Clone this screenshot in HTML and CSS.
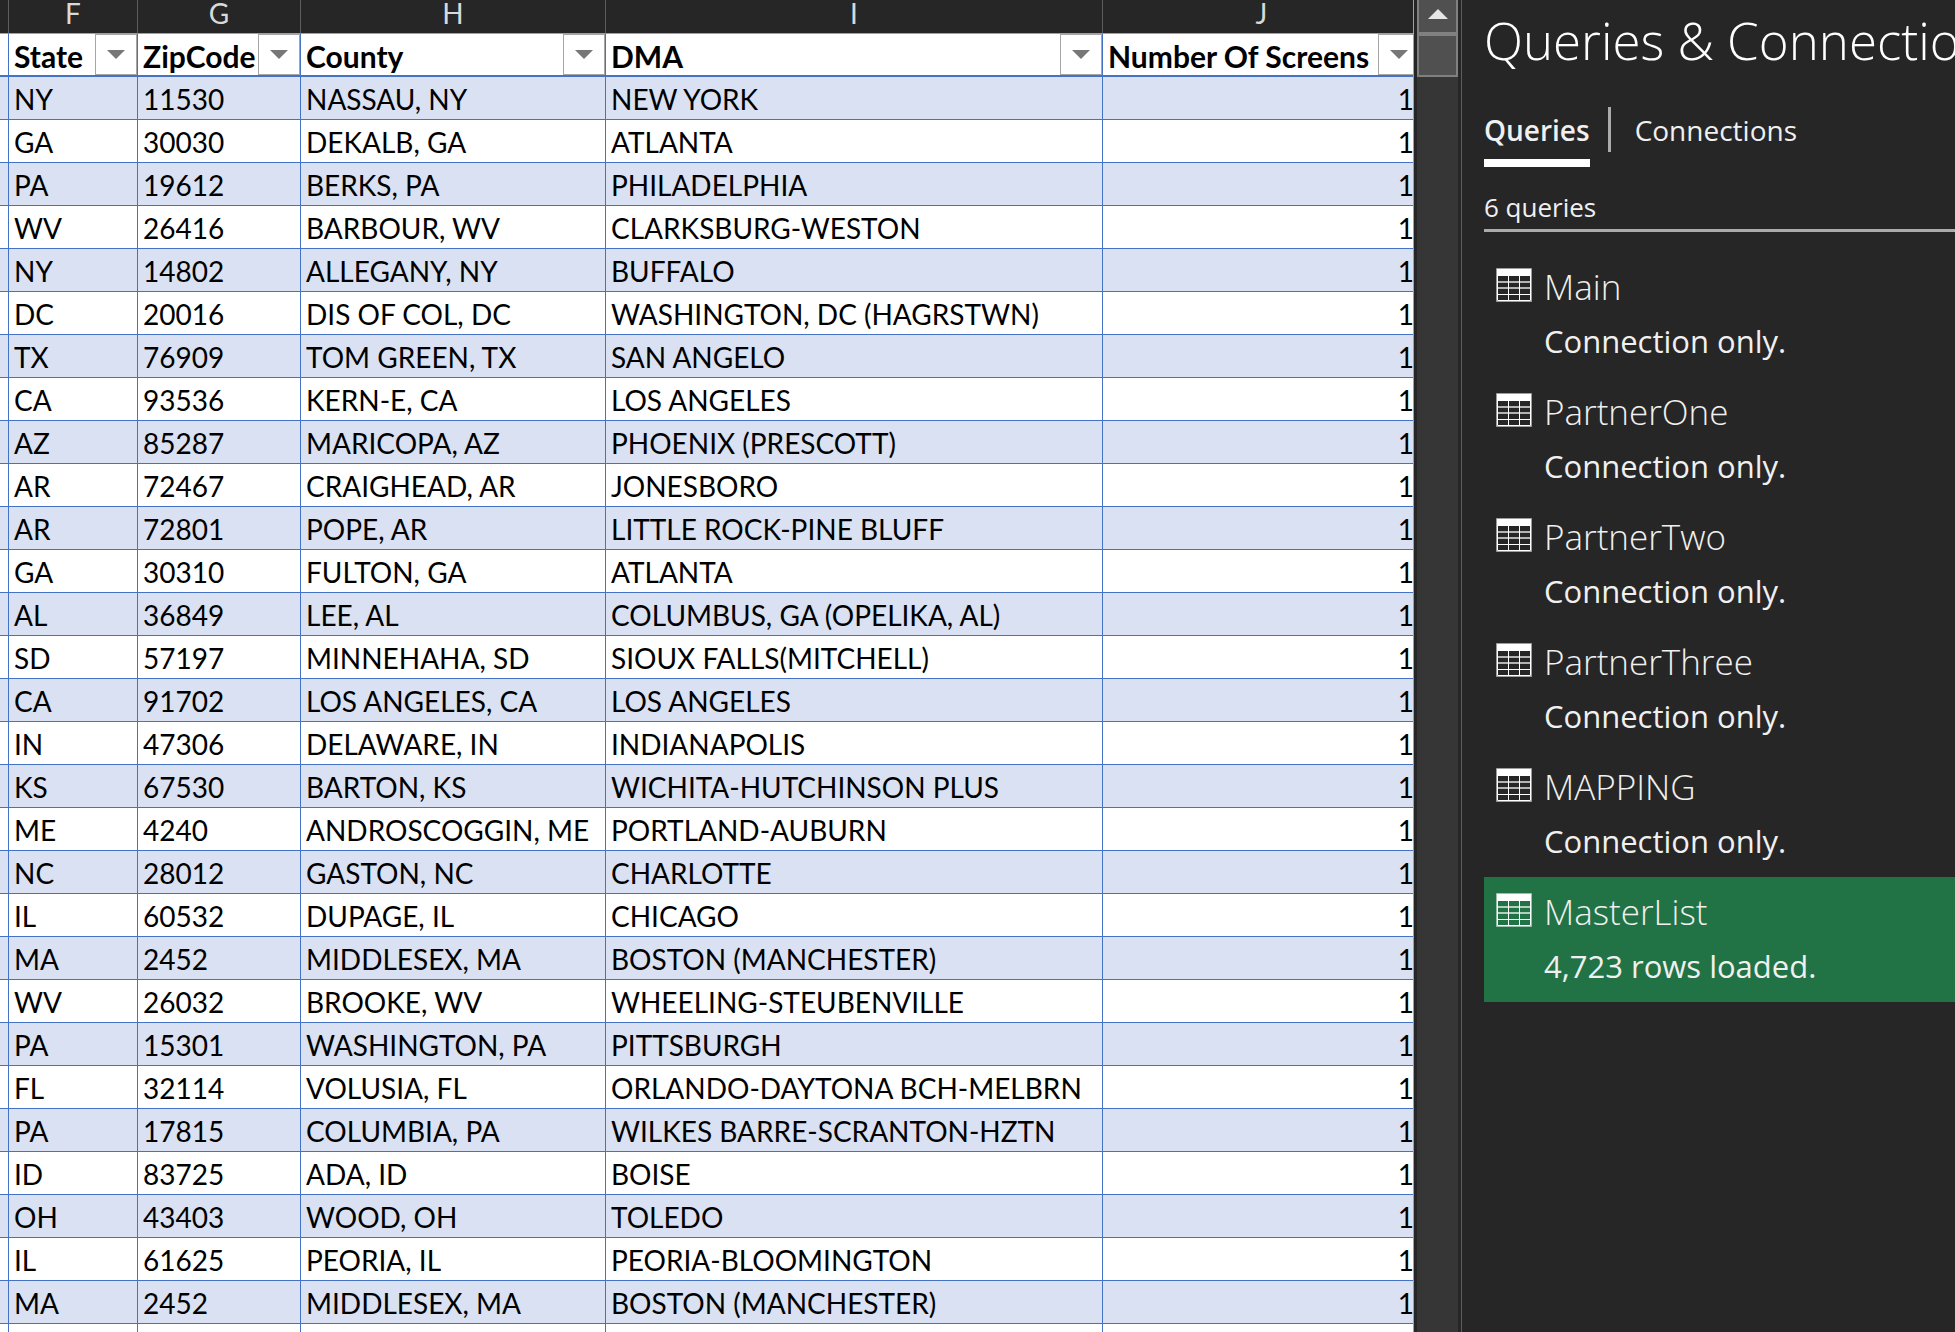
FILE: index.html
```html
<!DOCTYPE html>
<html lang="en">
<head>
<meta charset="utf-8">
<title>Queries &amp; Connections</title>
<link rel="stylesheet" href="styles.css">
</head>
<body>
<svg class="sprite" aria-hidden="true">
  <symbol id="table-icon" viewBox="0 0 36 34">
    <path d="M.5 .5h35v33H.5z" fill="none" stroke="#fff" stroke-opacity=".55"/>
    <path d="M1 1h34v7H1z" fill="#fff"/>
    <path d="M1.500 8v24.500h33V8M12.500 8v25M23.500 8v25M1 26.500h34" fill="none" stroke="#fff"/>
    <path d="M1 14h34M1 20h34" fill="none" stroke="#fff" stroke-opacity=".65" stroke-width="2"/>
  </symbol>
  <symbol id="arrow-down" viewBox="0 0 18 9"><path d="M0 0h18L9 9z" fill="#777"/></symbol>
  <symbol id="arrow-up" viewBox="0 0 20 10"><path d="M0 10h20L10 0z" fill="#e6e6e6"/></symbol>
</svg>
<div class="workbook">
  <main class="sheet">
    <table class="grid">
      <colgroup><col class="col-e"><col class="col-f"><col class="col-g"><col class="col-h"><col class="col-i"><col></colgroup>
      <thead>
        <tr class="letters"><th></th><th>F</th><th>G</th><th>H</th><th>I</th><th>J</th></tr>
        <tr class="fields">
          <th></th>
          <th><div class="field"><span>State</span><button class="filter" aria-label="Filter State"><svg><use href="#arrow-down"/></svg></button></div></th>
          <th><div class="field"><span>ZipCode</span><button class="filter" aria-label="Filter ZipCode"><svg><use href="#arrow-down"/></svg></button></div></th>
          <th><div class="field"><span>County</span><button class="filter" aria-label="Filter County"><svg><use href="#arrow-down"/></svg></button></div></th>
          <th><div class="field"><span>DMA</span><button class="filter" aria-label="Filter DMA"><svg><use href="#arrow-down"/></svg></button></div></th>
          <th><div class="field"><span>Number Of Screens</span><button class="filter" aria-label="Filter Number Of Screens"><svg><use href="#arrow-down"/></svg></button></div></th>
        </tr>
      </thead>
      <tbody>
        <tr><td></td><td>NY</td><td>11530</td><td>NASSAU, NY</td><td>NEW YORK</td><td>1</td></tr>
        <tr><td></td><td>GA</td><td>30030</td><td>DEKALB, GA</td><td>ATLANTA</td><td>1</td></tr>
        <tr><td></td><td>PA</td><td>19612</td><td>BERKS, PA</td><td>PHILADELPHIA</td><td>1</td></tr>
        <tr><td></td><td>WV</td><td>26416</td><td>BARBOUR, WV</td><td>CLARKSBURG-WESTON</td><td>1</td></tr>
        <tr><td></td><td>NY</td><td>14802</td><td>ALLEGANY, NY</td><td>BUFFALO</td><td>1</td></tr>
        <tr><td></td><td>DC</td><td>20016</td><td>DIS OF COL, DC</td><td>WASHINGTON, DC (HAGRSTWN)</td><td>1</td></tr>
        <tr><td></td><td>TX</td><td>76909</td><td>TOM GREEN, TX</td><td>SAN ANGELO</td><td>1</td></tr>
        <tr><td></td><td>CA</td><td>93536</td><td>KERN-E, CA</td><td>LOS ANGELES</td><td>1</td></tr>
        <tr><td></td><td>AZ</td><td>85287</td><td>MARICOPA, AZ</td><td>PHOENIX (PRESCOTT)</td><td>1</td></tr>
        <tr><td></td><td>AR</td><td>72467</td><td>CRAIGHEAD, AR</td><td>JONESBORO</td><td>1</td></tr>
        <tr><td></td><td>AR</td><td>72801</td><td>POPE, AR</td><td>LITTLE ROCK-PINE BLUFF</td><td>1</td></tr>
        <tr><td></td><td>GA</td><td>30310</td><td>FULTON, GA</td><td>ATLANTA</td><td>1</td></tr>
        <tr><td></td><td>AL</td><td>36849</td><td>LEE, AL</td><td>COLUMBUS, GA (OPELIKA, AL)</td><td>1</td></tr>
        <tr><td></td><td>SD</td><td>57197</td><td>MINNEHAHA, SD</td><td>SIOUX FALLS(MITCHELL)</td><td>1</td></tr>
        <tr><td></td><td>CA</td><td>91702</td><td>LOS ANGELES, CA</td><td>LOS ANGELES</td><td>1</td></tr>
        <tr><td></td><td>IN</td><td>47306</td><td>DELAWARE, IN</td><td>INDIANAPOLIS</td><td>1</td></tr>
        <tr><td></td><td>KS</td><td>67530</td><td>BARTON, KS</td><td>WICHITA-HUTCHINSON PLUS</td><td>1</td></tr>
        <tr><td></td><td>ME</td><td>4240</td><td>ANDROSCOGGIN, ME</td><td>PORTLAND-AUBURN</td><td>1</td></tr>
        <tr><td></td><td>NC</td><td>28012</td><td>GASTON, NC</td><td>CHARLOTTE</td><td>1</td></tr>
        <tr><td></td><td>IL</td><td>60532</td><td>DUPAGE, IL</td><td>CHICAGO</td><td>1</td></tr>
        <tr><td></td><td>MA</td><td>2452</td><td>MIDDLESEX, MA</td><td>BOSTON (MANCHESTER)</td><td>1</td></tr>
        <tr><td></td><td>WV</td><td>26032</td><td>BROOKE, WV</td><td>WHEELING-STEUBENVILLE</td><td>1</td></tr>
        <tr><td></td><td>PA</td><td>15301</td><td>WASHINGTON, PA</td><td>PITTSBURGH</td><td>1</td></tr>
        <tr><td></td><td>FL</td><td>32114</td><td>VOLUSIA, FL</td><td>ORLANDO-DAYTONA BCH-MELBRN</td><td>1</td></tr>
        <tr><td></td><td>PA</td><td>17815</td><td>COLUMBIA, PA</td><td>WILKES BARRE-SCRANTON-HZTN</td><td>1</td></tr>
        <tr><td></td><td>ID</td><td>83725</td><td>ADA, ID</td><td>BOISE</td><td>1</td></tr>
        <tr><td></td><td>OH</td><td>43403</td><td>WOOD, OH</td><td>TOLEDO</td><td>1</td></tr>
        <tr><td></td><td>IL</td><td>61625</td><td>PEORIA, IL</td><td>PEORIA-BLOOMINGTON</td><td>1</td></tr>
        <tr><td></td><td>MA</td><td>2452</td><td>MIDDLESEX, MA</td><td>BOSTON (MANCHESTER)</td><td>1</td></tr>
        <tr class="blank"><td></td><td></td><td></td><td></td><td></td><td></td></tr>
      </tbody>
    </table>
  </main>
  <div class="scrollbar">
    <button class="scroll-up" aria-label="Scroll up"><svg><use href="#arrow-up"/></svg></button>
    <div class="thumb"></div>
  </div>
  <aside class="pane">
    <h1>Queries &amp; Connections</h1>
    <nav class="tabs">
      <button class="tab active">Queries</button>
      <button class="tab">Connections</button>
    </nav>
    <p class="count">6 queries</p>
    <ul class="queries">
      <li><button class="query"><svg><use href="#table-icon"/></svg><span class="name">Main</span><span class="status">Connection only.</span></button></li>
      <li><button class="query"><svg><use href="#table-icon"/></svg><span class="name">PartnerOne</span><span class="status">Connection only.</span></button></li>
      <li><button class="query"><svg><use href="#table-icon"/></svg><span class="name">PartnerTwo</span><span class="status">Connection only.</span></button></li>
      <li><button class="query"><svg><use href="#table-icon"/></svg><span class="name">PartnerThree</span><span class="status">Connection only.</span></button></li>
      <li><button class="query"><svg><use href="#table-icon"/></svg><span class="name">MAPPING</span><span class="status">Connection only.</span></button></li>
      <li><button class="query selected"><svg><use href="#table-icon"/></svg><span class="name">MasterList</span><span class="status">4,723 rows loaded.</span></button></li>
    </ul>
  </aside>
</div>
</body>
</html>
```
FILE: styles.css
```css
* { box-sizing: border-box; }

body {
  margin: 0;
  background: #262626;
  color: #f0f0f0;
  font-family: "Open Sans", sans-serif;
}

button {
  margin: 0;
  padding: 0;
  border: 0;
  background: none;
  color: inherit;
  font: inherit;
  text-align: left;
}

.sprite { display: none; }

.workbook {
  display: flex;
  height: 100vh;
  overflow: hidden;
}

/* Sheet */
.sheet {
  flex: 1;
  min-width: 0;
  overflow: hidden;
  border-right: 1px solid #a0a0a0;
}

.grid {
  width: calc(100% + 8px);
  table-layout: fixed;
  border-collapse: separate;
  border-spacing: 0;
  background: #fff;
  color: #000;
  font-family: Lato, sans-serif;
  font-size: 28px;
  line-height: 40px;
}

.col-e { width: 9px; }
.col-f { width: 129px; }
.col-g { width: 163px; }
.col-h { width: 305px; }
.col-i { width: 497px; }

.grid th,
.grid td {
  height: 43px;
  padding: 2px 0 0 5px;
  border-right: 1px solid #4472c4;
  border-bottom: 1px solid #4472c4;
  text-align: left;
  white-space: nowrap;
}

.grid th:first-child,
.grid td:first-child { padding: 0; }

.grid td:last-child {
  padding-right: 6px;
  text-align: right;
}

.grid tbody tr:nth-child(odd) { background: #d9e1f2; }

.grid .letters th {
  height: 34px;
  padding: 0 0 7px;
  border-right-color: #5c5c5c;
  border-bottom-color: #a0a0a0;
  background: #262626;
  color: #d9d9d9;
  font-weight: 400;
  line-height: 26px;
  text-align: center;
}

.grid .fields th {
  padding-top: 0;
  border-bottom-width: 2px;
  font-size: 30px;
}

.field {
  display: flex;
  justify-content: space-between;
  height: 41px;
  line-height: 44px;
}

.field span {
  flex: 1;
  min-width: 0;
}

.filter {
  display: flex;
  flex: none;
  align-items: center;
  justify-content: center;
  width: 42px;
  height: 41px;
  border: 1px solid #a6a6a6;
  background: #fff;
}

.filter svg {
  width: 18px;
  height: 9px;
}

/* Scrollbar */
.scrollbar {
  flex: none;
  width: 41px;
  margin: 0 3px;
  background: #363636;
}

.scroll-up {
  display: flex;
  align-items: center;
  justify-content: center;
  width: 100%;
  height: 34px;
  padding-bottom: 4px;
  border: 2px solid #808080;
  border-top: 0;
  background: #505050;
}

.scroll-up svg {
  width: 20px;
  height: 10px;
}

.thumb {
  height: 43px;
  border: 2px solid #808080;
  background: #505050;
}

/* Queries pane */
.pane {
  flex: none;
  width: 494px;
  padding-left: 22px;
  border-left: 1px solid #5c5c5c;
  overflow: hidden;
}

.pane h1 {
  margin: 0;
  padding: 2px 0;
  font-size: 51px;
  font-weight: 300;
  line-height: 76px;
  color: #fff;
  white-space: nowrap;
}

.tabs {
  display: flex;
  padding-top: 27px;
}

.tab {
  display: flex;
  height: 60px;
  font-size: 28px;
  line-height: 46px;
}

.tab.active {
  border-bottom: 8px solid #fff;
  font-weight: 600;
}

.tab + .tab::before {
  content: "";
  width: 3px;
  height: 45px;
  margin: 0 24px 0 18px;
  background: #ababab;
}

.count {
  margin: 0;
  padding: 20px 0 2px;
  border-bottom: 3px solid #ababab;
  font-size: 26px;
  line-height: 40px;
}

.queries {
  margin: 0;
  padding: 20px 0 0;
  list-style: none;
}

.query {
  display: grid;
  grid-template-columns: 36px 1fr;
  grid-template-rows: 54px 54px;
  column-gap: 12px;
  width: 100%;
  height: 125px;
  padding: 8px 0 0 12px;
}

.query svg {
  width: 36px;
  height: 34px;
  margin-top: 8px;
}

.query .name {
  font-size: 35px;
  font-weight: 300;
  line-height: 54px;
}

.query .status {
  grid-column: 2;
  font-size: 31px;
  line-height: 54px;
}

.query.selected { background: #217346; }
```
